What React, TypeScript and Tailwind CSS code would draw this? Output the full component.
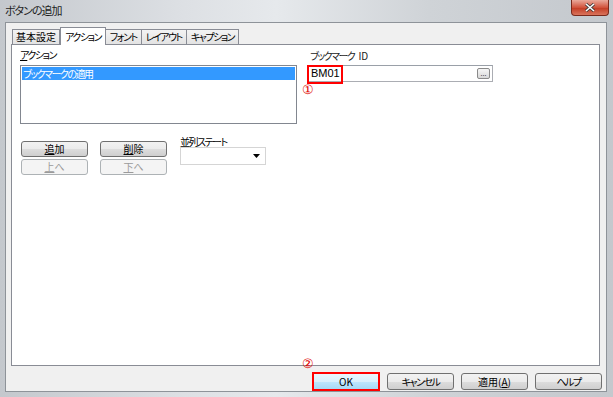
import React from 'react';

const font = {
	fontFamily: '"Noto Sans CJK JP", "Liberation Sans", sans-serif',
	fontFeatureSettings: '"palt"',
};

// narrower kana, like the old UI font
const kana = 'tracking-[-1.5px]';

function WinButton({
	children,
	disabled,
	className = '',
}: {
	children: React.ReactNode;
	disabled?: boolean;
	className?: string;
}) {
	if (disabled) {
		return (
			<div
				className={`flex h-[16px] items-center justify-center rounded-[3px] border border-[#adb2b5] bg-[#f4f4f4] text-[10px] leading-none text-[#9a9a9a] ${className}`}
			>
				{children}
			</div>
		);
	}
	return (
		<div
			className={`flex h-[16px] items-center justify-center rounded-[3px] border border-[#707070] bg-[linear-gradient(#f2f2f2_0%,#ebebeb_50%,#dddddd_51%,#cfcfcf_100%)] text-[10px] leading-none text-black ${className}`}
		>
			{children}
		</div>
	);
}

function Tab({ label, active, narrow }: { label: string; active?: boolean; narrow?: boolean }) {
	const t = narrow ? `${kana} px-[4px]` : 'px-[3px]';
	if (active) {
		return (
			<div className={`relative z-10 -mb-px flex h-[18px] items-center border border-b-0 border-[#898c95] bg-white text-[10px] leading-none ${t}`}>
				{label}
			</div>
		);
	}
	return (
		<div className={`flex h-[15px] items-center border border-b-0 border-l-0 border-[#898c95] bg-[linear-gradient(#f3f3f3,#e3e3e3)] text-[10px] leading-none first:border-l ${t}`}>
			{label}
		</div>
	);
}

export default function App() {
	return (
		<div
			className="flex h-[397px] w-[613px] flex-col bg-[linear-gradient(90deg,#c4c8cd,#dde0e4_30%,#e6e9ec_45%,#cfd3d7_70%,#c4c8cd)] text-black"
			style={font}
		>
			{/* title bar */}
			<div className="flex h-[22px] shrink-0 items-start justify-between">
				<div className="pl-[5px] pt-[5px] text-[11px] leading-none tracking-[-1px] text-[#1e1e1e]">
					ボタンの追加
				</div>
				<div className="mr-[4px] flex h-[16px] w-[38px] items-center justify-center rounded-b-[4px] border border-t-0 border-[#7a2a1c] bg-[linear-gradient(#e9a99b,#d1533c_50%,#c23a22_51%,#d9745c)]">
					<svg width="10" height="9" viewBox="0 0 10 9">
						<path d="M1 1 L9 8 M9 1 L1 8" stroke="#3a3a3a" strokeWidth="3" />
						<path d="M1 1 L9 8 M9 1 L1 8" stroke="#ffffff" strokeWidth="1.6" />
					</svg>
				</div>
			</div>

			{/* window body */}
			<div className="flex min-h-0 flex-1 px-[5px] pb-[5px] pr-[6px]">
				<div className="flex flex-1 flex-col border border-[#8e9399] bg-[#f0f0f0] pl-[5px] pr-[4px]">
					{/* tabs */}
					<div className="flex h-[21px] items-end pl-[1px]">
						<Tab label="基本設定" />
						<Tab label="アクション" active narrow />
						<Tab label="フォント" narrow />
						<Tab label="レイアウト" narrow />
						<Tab label="キャプション" narrow />
					</div>

					{/* panel */}
					<div className="relative mr-[2px] flex h-[322px] border border-[#898c95] bg-white pl-[8px] pt-[3px]">
						<div className="flex w-[277px] flex-col">
							<div className={`h-[17px] text-[10px] leading-[14px] ${kana}`}>
								<span className="underline">ア</span>クション
							</div>
							<div className="h-[59px] border border-[#828790] bg-white p-[1px]">
								<div className={`h-[13px] bg-[#3399ff] pl-[1px] text-[10px] leading-[13px] text-white ${kana}`}>
									ブックマークの適用
								</div>
							</div>
							<div className="mt-[17px] flex gap-[12px] pl-[1px]">
								<div className="flex flex-col gap-[2px]">
									<WinButton className="w-[67px]">
										<span className="underline">追</span>加
									</WinButton>
									<WinButton className="w-[67px]" disabled>
										<span className="underline">上</span>へ
									</WinButton>
								</div>
								<div className="flex flex-col gap-[2px]">
									<WinButton className="w-[67px]">
										<span className="underline">削</span>除
									</WinButton>
									<WinButton className="w-[67px]" disabled>
										<span className="underline">下</span>へ
									</WinButton>
								</div>
								<div className="-mt-[4px] flex flex-col pl-[1px]">
									<div className={`h-[10px] text-[10px] leading-[10px] ${kana}`}>
										<span className="underline">並</span>列ステート
									</div>
									<div className="flex h-[18px] w-[86px] items-center justify-end border border-[#d5d5d5] bg-white pr-[5px]">
										<svg width="7" height="4" viewBox="0 0 7 4">
											<path d="M0 0 H7 L3.5 4 Z" fill="#000" />
										</svg>
									</div>
								</div>
							</div>
						</div>

						<div className="ml-[10px] flex flex-col pt-[2px]">
							<div className="h-[15px] pl-[3px] text-[10px] leading-[12px] text-[#222]">
								<span className={kana}>ブックマーク</span>
								<span className="ml-[4px]">ID</span>
							</div>
							<div className="relative flex h-[17px] w-[186px] items-center justify-between border border-[#abadb3] border-t-[#9aa0a8] bg-white pl-[3px] pr-[2px]">
								<span className="text-[11px] leading-none" style={{ fontFamily: '"Liberation Sans", sans-serif' }}>
									BM01
								</span>
								<div className="flex h-[11px] w-[13px] items-end justify-center rounded-[2px] border border-[#8a8a8a] bg-[linear-gradient(#f6f6f6,#d8d8d8)] pb-[1px]">
									<span className="text-[7px] leading-none text-[#333]">...</span>
								</div>
								<div className="absolute left-[-1px] top-[-1px] h-[19px] w-[36px] border-2 border-[#ff0000]" />
								<div
									className="absolute left-[-6px] top-[17px] text-[13px] leading-none text-[#e00000]"
									style={{ fontFamily: '"Liberation Serif", serif' }}
								>
									①
								</div>
							</div>
						</div>
					</div>

					{/* bottom buttons */}
					<div className="mt-[6px] flex justify-end gap-[7px]">
						<div className="relative">
							<div className="flex h-[19px] w-[68px] items-center justify-center border-2 border-[#ff0000] bg-[linear-gradient(#eaf6fd,#d9f0fc_50%,#bee6fd_51%,#a7d9f5)] text-[10px] leading-none">
								OK
							</div>
							<div
								className="absolute left-[-10px] top-[-15px] text-[13px] leading-none text-[#e00000]"
								style={{ fontFamily: '"Liberation Serif", serif' }}
							>
								②
							</div>
						</div>
						<WinButton className={`mt-[1px] w-[67px] !h-[17px] ${kana}`}>キャンセル</WinButton>
						<WinButton className="mt-[1px] w-[67px] !h-[17px]">
							適用(<span className="underline">A</span>)
						</WinButton>
						<WinButton className={`mt-[1px] w-[67px] !h-[17px] ${kana}`}>ヘルプ</WinButton>
					</div>
				</div>
			</div>
		</div>
	);
}
